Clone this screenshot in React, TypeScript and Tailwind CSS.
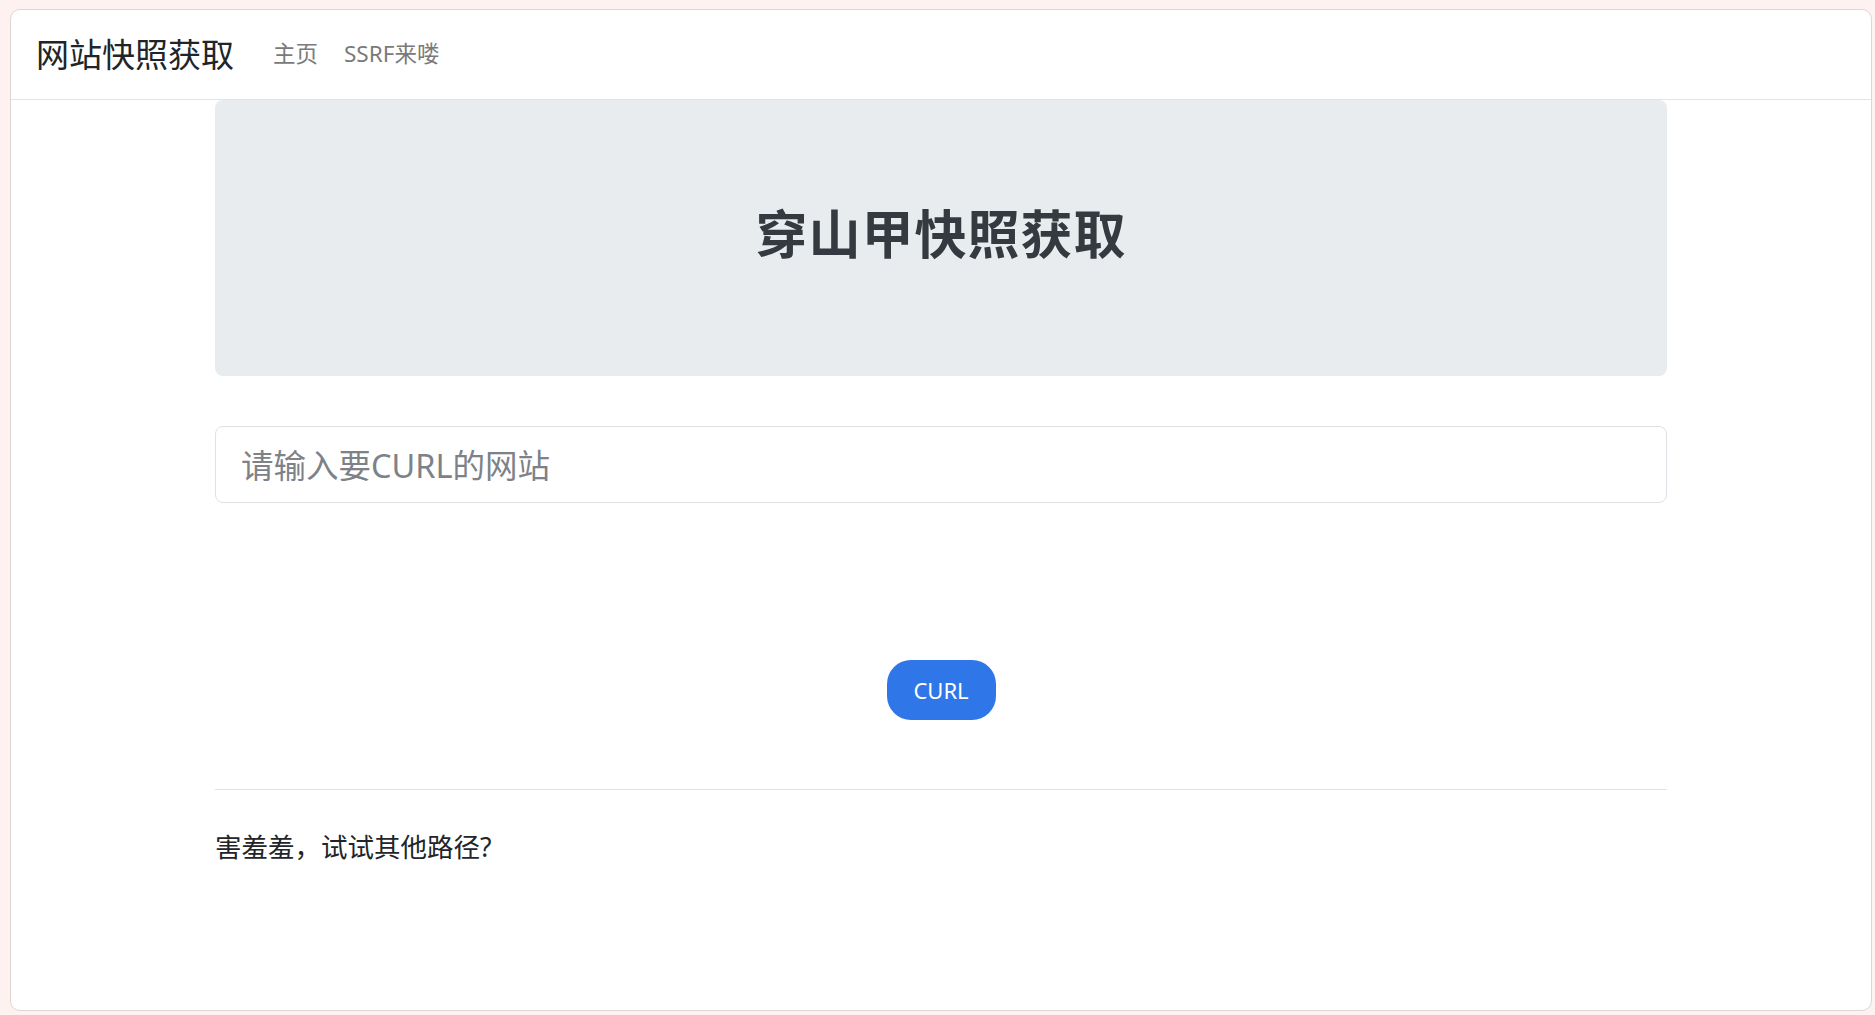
import React from "react";

const font = { fontFamily: '"Noto Sans", "Noto Sans CJK SC", sans-serif' };

export default function App() {
  return (
    <div
      className="w-[1875px] h-[1015px] bg-[#fdf2ef] pt-[9px] pl-[10px] pr-[3px] pb-[4px] overflow-hidden"
      style={font}
    >
      <div className="h-[1002px] bg-white border border-[#dcd6d4] rounded-[10px] overflow-hidden flex flex-col">
        <nav className="h-[90px] shrink-0 border-b border-[#e3e3e3] flex items-center pl-[25px]">
          <span className="text-[33px] leading-none text-[#212529]">网站快照获取</span>
          <span className="ml-[39px] text-[22.5px] leading-none text-[#7a7a7a]">主页</span>
          <span className="ml-[26px] text-[22.5px] leading-none text-[#7a7a7a]">SSRF来喽</span>
        </nav>
        <div className="w-[1452px] mx-auto flex flex-col">
          <div className="h-[276px] bg-[#e9ecef] rounded-[8px] flex items-center justify-center pb-[9px]">
            <h1 className="text-[52px] font-bold leading-none text-[#343a40] tracking-[1px]">穿山甲快照获取</h1>
          </div>
          <div className="mt-[50px] h-[77px] border border-[#dee2e6] rounded-[8px] flex items-center pl-[25px] pt-[3px]">
            <span className="text-[32.5px] leading-none text-[#7d8288]">请输入要CURL的网站</span>
          </div>
          <div className="mt-[157px] flex justify-center">
            <button className="w-[109px] h-[60px] rounded-[24px] bg-[#2f76e8] text-white text-[22px] leading-none">
              CURL
            </button>
          </div>
          <div className="mt-[69px] h-px bg-[#e2e2e2]" />
          <p className="mt-[44px] text-[26.5px] leading-none text-[#212529]">害羞羞，试试其他路径?</p>
        </div>
      </div>
    </div>
  );
}
